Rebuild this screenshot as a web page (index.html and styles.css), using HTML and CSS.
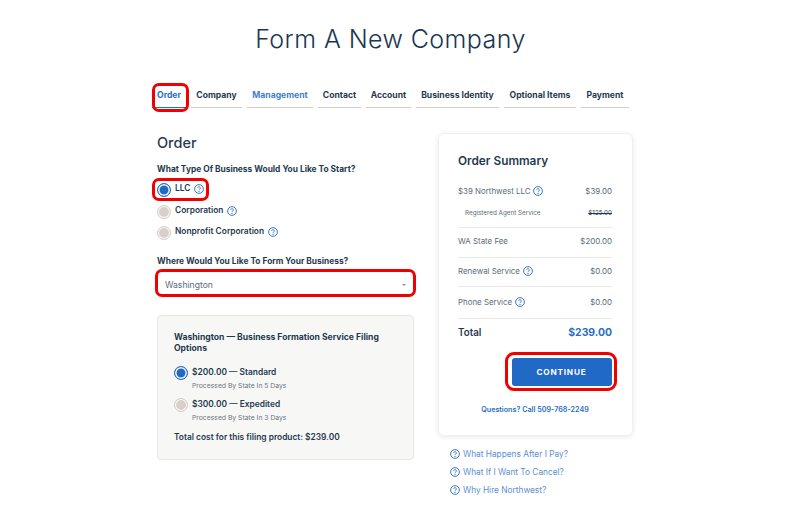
FILE: index.html
```html
<!DOCTYPE html>
<html lang="en">
<head>
<meta charset="utf-8">
<title>Form A New Company</title>
<link rel="stylesheet" href="styles.css">
</head>
<body>
<svg class="defs" width="0" height="0" aria-hidden="true">
  <symbol id="q" viewBox="0 0 16 16">
    <circle cx="8" cy="8" r="7" fill="none" stroke="currentColor" stroke-width="1.5"/>
    <path d="M5.9 6.3a2.1 2.1 0 1 1 3.3 1.7c-.8.5-1.2.9-1.2 1.8" fill="none" stroke="currentColor" stroke-width="1.4"/>
    <circle cx="8" cy="11.8" r=".9" fill="currentColor"/>
  </symbol>
</svg>
<main class="page">
  <h1 class="title">Form A New Company</h1>
  <nav class="tabs">
    <a class="tab tab-active hl">Order</a>
    <a class="tab">Company</a>
    <a class="tab tab-blue">Management</a>
    <a class="tab">Contact</a>
    <a class="tab">Account</a>
    <a class="tab">Business Identity</a>
    <a class="tab">Optional Items</a>
    <a class="tab">Payment</a>
  </nav>
  <div class="columns">
    <section class="form">
      <h2 class="form-title">Order</h2>
      <p class="label">What Type Of Business Would You Like To Start?</p>
      <div class="radios">
        <div class="radio-row hl hl-llc"><span class="radio on"></span><span class="radio-text">LLC</span><svg class="q"><use href="#q"/></svg></div>
        <div class="radio-row"><span class="radio"></span><span class="radio-text">Corporation</span><svg class="q"><use href="#q"/></svg></div>
        <div class="radio-row"><span class="radio"></span><span class="radio-text">Nonprofit Corporation</span><svg class="q"><use href="#q"/></svg></div>
      </div>
      <p class="label label-where">Where Would You Like To Form Your Business?</p>
      <div class="select hl hl-select"><span>Washington</span><span class="caret"></span></div>
      <div class="options">
        <p class="options-title">Washington — Business Formation Service Filing Options</p>
        <div class="option"><span class="radio on"></span><div><p class="option-name">$200.00 — Standard</p><p class="option-note">Processed By State In 5 Days</p></div></div>
        <div class="option"><span class="radio"></span><div><p class="option-name">$300.00 — Expedited</p><p class="option-note">Processed By State In 3 Days</p></div></div>
        <p class="option-total">Total cost for this filing product: $239.00</p>
      </div>
    </section>
    <aside class="side">
      <div class="card">
        <h2 class="card-title">Order Summary</h2>
        <div class="line line-first"><span class="line-name">$39 Northwest LLC<svg class="q"><use href="#q"/></svg></span><span>$39.00</span></div>
        <div class="subline"><span>Registered Agent Service</span><s>$125.00</s></div>
        <div class="line line-fee"><span class="line-name">WA State Fee</span><span>$200.00</span></div>
        <div class="line line-renew"><span class="line-name">Renewal Service<svg class="q"><use href="#q"/></svg></span><span>$0.00</span></div>
        <div class="line line-phone"><span class="line-name">Phone Service<svg class="q"><use href="#q"/></svg></span><span>$0.00</span></div>
        <div class="total"><span>Total</span><span class="total-value">$239.00</span></div>
        <div class="cta"><button class="continue hl hl-btn">CONTINUE</button></div>
        <p class="call">Questions? Call 509-768-2249</p>
      </div>
      <ul class="faq">
        <li><svg class="q q-faq"><use href="#q"/></svg>What Happens After I Pay?</li>
        <li><svg class="q q-faq"><use href="#q"/></svg>What If I Want To Cancel?</li>
        <li><svg class="q q-faq"><use href="#q"/></svg>Why Hire Northwest?</li>
      </ul>
    </aside>
  </div>
</main>
</body>
</html>
```
FILE: styles.css
```css
* { box-sizing: border-box; }
*::after { box-sizing: border-box; }
html, body { margin: 0; padding: 0; background: #fff; }
body { font-family: Inter, "Liberation Sans", sans-serif; color: #1f3a4f; overflow: hidden; height: 515px; }
p, h1, h2, ul { margin: 0; padding: 0; }
.defs { position: absolute; }
.page { width: 801px; padding-top: 23px; }
.title { padding-right: 20px; text-align: center; font-size: 25px; line-height: 32px; font-weight: 300; color: #1a3750; letter-spacing: .42px; }

.tabs { display: flex; gap: 5px; margin: 33px 0 0 152px; }
.tab { display: block; position: relative; height: 20px; padding-top: 1px; text-align: center; font-size: 8.6px; line-height: 12px; font-weight: 700; color: #1f3a4f; border-bottom: 1px solid #d8cfca; white-space: nowrap; }
.tab:nth-child(1) { width: 34px; }
.tab:nth-child(2) { width: 51px; }
.tab:nth-child(3) { width: 66px; }
.tab:nth-child(4) { width: 43px; }
.tab:nth-child(5) { width: 45px; }
.tab:nth-child(6) { width: 83px; }
.tab:nth-child(7) { width: 72px; }
.tab:nth-child(8) { width: 48px; }
.tab-active { color: #2a6fc4; border-bottom-color: #2a6fc4; }
.tab-blue { color: #3f7fcf; }

.hl { position: relative; }
.hl::after { content: ""; position: absolute; border: 3px solid #f00000; border-radius: 7px; pointer-events: none; }
.tab.hl::after { left: 0; right: -3px; top: -5px; bottom: -5px; }
.hl-llc::after { left: -5px; top: -4px; width: 57px; height: 23px; }
.hl-select::after { left: -2px; right: -2px; top: -1px; bottom: -1px; }
.hl-btn::after { left: -7px; right: -5px; top: -6px; bottom: -5px; border-radius: 9px; }

.columns { display: flex; align-items: flex-start; gap: 24px; margin: 25px 0 0 157px; }
.form { width: 257px; }
.form-title { font-size: 14.5px; line-height: 20px; font-weight: 500; }
.label { font-size: 8.4px; line-height: 12px; font-weight: 700; margin-top: 10px; white-space: nowrap; }
.label-where { margin-top: 14px; }

.radios { display: flex; flex-direction: column; gap: 5.5px; margin-top: 7px; }
.radio-row { display: flex; align-items: flex-start; height: 16px; }
.radio-text { font-size: 8.4px; line-height: 12px; font-weight: 600; margin-left: 4px; }
.radio-row .q { margin: 2px 0 0 4px; }
.radio { flex: none; width: 14px; height: 14px; border-radius: 50%; border: 1px solid #d8cfca; background: #d8cfca; box-shadow: inset 0 0 0 1px #fff; margin-top: 1px; }
.radio.on { border-color: #2a6fc4; background: #2069c4; box-shadow: inset 0 0 0 1.5px #fff; }
.q { flex: none; display: inline-block; width: 10px; height: 10px; color: #2a6fc4; }

.select { display: flex; justify-content: space-between; align-items: center; height: 26px; margin-top: 3px; padding: 3px 8px 0; font-size: 8.6px; color: #5c6b77; border-radius: 5px; }
.caret { width: 0; height: 0; border-left: 2px solid transparent; border-right: 2px solid transparent; border-top: 2px solid #8a949c; }

.options { margin-top: 19px; height: 145px; padding: 16px; background: #f7f7f6; border: 1px solid #e8e8e6; border-radius: 4px; }
.options-title { font-size: 8.6px; line-height: 11px; font-weight: 700; }
.option { display: flex; gap: 4px; margin-top: 7.5px; }
.options-title + .option { margin-top: 11px; }
.option-name { font-size: 8.4px; line-height: 12px; font-weight: 600; margin-top: 1px; }
.option-note { font-size: 6.8px; line-height: 9px; color: #6d7680; margin-top: 2.5px; white-space: nowrap; }
.option-total { font-size: 8.4px; line-height: 12px; font-weight: 600; margin-top: 9.5px; white-space: nowrap; }

.side { width: 195px; }
.card { height: 303px; padding: 19px 20px 0 19px; border: 1px solid #f0f0f0; border-radius: 6px; box-shadow: 0 1px 5px rgba(0,0,0,.09); }
.card-title { font-size: 11.8px; line-height: 16px; font-weight: 600; }
.line { display: flex; justify-content: space-between; align-items: center; font-size: 7.9px; color: #5c6b77; border-top: 1px solid #e9e9e9; }
.line-first { border-top: 0; height: 23px; margin-top: 10.5px; }
.line-fee { height: 30px; padding-bottom: 3px; }
.line-renew { height: 29px; padding-bottom: 2px; }
.line-phone { height: 32px; padding-bottom: 2px; }
.line-name { display: flex; align-items: center; gap: 3px; }
.subline { display: flex; justify-content: space-between; align-items: center; height: 21px; margin-bottom: 3.5px; padding-left: 7px; font-size: 6.3px; color: #5c6b77; }
.subline s { color: #1f3a4f; }
.total { display: flex; justify-content: space-between; align-items: center; height: 29px; padding-bottom: 2px; border-top: 1px solid #e9e9e9; font-size: 9.8px; font-weight: 600; }
.total-value { color: #2a6fc4; font-size: 10.4px; font-weight: 700; }
.cta { display: flex; justify-content: flex-end; margin-top: 11px; }
.continue { width: 100px; height: 28px; padding: 0 1px 0 0; border: 0; border-radius: 3px; background: #2069c4; color: #fff; font: 700 8.2px Inter, "Liberation Sans", sans-serif; letter-spacing: .8px; }
.call { margin-top: 19px; text-align: center; font-size: 7.2px; line-height: 10px; font-weight: 600; color: #2a6fc4; }

.faq { list-style: none; margin: 9px 0 0 12px; }
.faq li { display: flex; align-items: center; gap: 3px; height: 18px; font-size: 8.3px; color: #5a8fd0; }
.q-faq { width: 10px; height: 10px; }
```
